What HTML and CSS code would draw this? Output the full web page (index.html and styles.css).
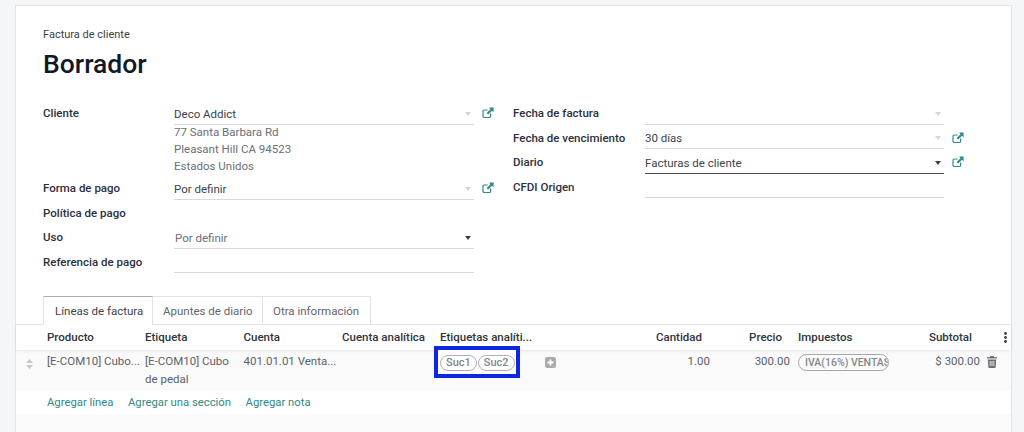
FILE: index.html
```html
<!DOCTYPE html>
<html lang="es">
<head>
<meta charset="utf-8">
<title>Factura de cliente</title>
<link rel="stylesheet" href="styles.css">
</head>
<body>
<svg class="defs" width="0" height="0" aria-hidden="true">
  <symbol id="ext" viewBox="0 0 12 12">
    <path d="M8.6 6.6v2.6a1.3 1.3 0 0 1-1.3 1.3H2.3A1.3 1.3 0 0 1 1 9.2V4.3A1.3 1.3 0 0 1 2.3 3h3.4" fill="none" stroke="currentColor" stroke-width="1.2"/>
    <path d="M7 0.6h4.6v4.6L10 3.7 6.2 7.6 4.6 6 8.5 2.2z" fill="currentColor"/>
  </symbol>
</svg>
<main class="sheet">
  <div class="head">
    <div class="kind">Factura de cliente</div>
    <h1 class="title">Borrador</h1>
  </div>
  <div class="groups">
    <div class="group">
      <div class="row tall">
        <div class="lbl">Cliente</div>
        <div class="val">
          <div class="input"><span>Deco Addict</span><i class="caret light"></i></div>
          <div class="addr">77 Santa Barbara Rd<br>Pleasant Hill CA 94523<br>Estados Unidos</div>
        </div>
        <svg class="ext"><use href="#ext"/></svg>
      </div>
      <div class="row">
        <div class="lbl">Forma de pago</div>
        <div class="val"><div class="input"><span>Por definir</span><i class="caret light"></i></div></div>
        <svg class="ext"><use href="#ext"/></svg>
      </div>
      <div class="row">
        <div class="lbl">Política de pago</div>
        <div class="val"></div>
      </div>
      <div class="row">
        <div class="lbl">Uso</div>
        <div class="val"><div class="input muted"><span class="pad">Por definir</span><i class="caret"></i></div></div>
      </div>
      <div class="row">
        <div class="lbl">Referencia de pago</div>
        <div class="val"><div class="input"></div></div>
      </div>
    </div>
    <div class="group">
      <div class="row">
        <div class="lbl">Fecha de factura</div>
        <div class="val"><div class="input"><span></span><i class="caret light"></i></div></div>
      </div>
      <div class="row">
        <div class="lbl">Fecha de vencimiento</div>
        <div class="val"><div class="input"><span>30 días</span><i class="caret light"></i></div></div>
        <svg class="ext"><use href="#ext"/></svg>
      </div>
      <div class="row">
        <div class="lbl">Diario</div>
        <div class="val"><div class="input focus"><span>Facturas de cliente</span><i class="caret"></i></div></div>
        <svg class="ext"><use href="#ext"/></svg>
      </div>
      <div class="row">
        <div class="lbl">CFDI Origen</div>
        <div class="val"><div class="input"></div></div>
      </div>
    </div>
  </div>
  <nav class="tabs">
    <div class="tab active">Líneas de factura</div>
    <div class="tab">Apuntes de diario</div>
    <div class="tab">Otra información</div>
  </nav>
  <div class="lines">
    <div class="grid thead">
      <div></div>
      <div>Producto</div>
      <div>Etiqueta</div>
      <div>Cuenta</div>
      <div>Cuenta analítica</div>
      <div>Etiquetas analíti...</div>
      <div></div>
      <div class="num">Cantidad</div>
      <div class="num">Precio</div>
      <div>Impuestos</div>
      <div class="num">Subtotal</div>
      <div class="dots"><svg width="3" height="11" viewBox="0 0 3 11"><circle cx="1.5" cy="1.5" r="1.4"/><circle cx="1.5" cy="5.5" r="1.4"/><circle cx="1.5" cy="9.5" r="1.4"/></svg></div>
    </div>
    <div class="grid tbody">
      <div class="handle"><svg width="7" height="10" viewBox="0 0 7 10"><path d="M3.5 0 7 4H0zM0 6h7l-3.5 4z"/></svg></div>
      <div class="clip">[E-COM10] Cubo...</div>
      <div>[E-COM10] Cubo de pedal</div>
      <div class="clip">401.01.01 Venta...</div>
      <div></div>
      <div class="tagcell">
        <span class="mark"></span>
        <span class="tag">Suc1</span><span class="tag">Suc2</span>
      </div>
      <div class="plus"><svg width="11" height="11" viewBox="0 0 11 11"><rect width="11" height="11" rx="2.2"/><path d="M5.5 2.5v6M2.5 5.5h6" stroke="#fff" stroke-width="1.8"/></svg></div>
      <div class="num">1.00</div>
      <div class="num">300.00</div>
      <div><span class="tax">IVA(16%) VENTAS</span></div>
      <div class="num">$ 300.00</div>
      <div class="trash"><svg width="10" height="12" viewBox="0 0 10 12"><path d="M3.4 0h3.2l.6 1.3H10v1.3H0V1.3h2.8zM.8 3.4h8.4l-.5 7.5a1.1 1.1 0 0 1-1.1 1.1H2.4a1.1 1.1 0 0 1-1.1-1.1z"/><path d="M3.2 5v5M5 5v5M6.8 5v5" stroke="#fafafa" stroke-width=".8"/></svg></div>
    </div>
    <div class="adds">
      <a>Agregar línea</a><a>Agregar una sección</a><a>Agregar nota</a>
    </div>
    <div class="foot"></div>
  </div>
</main>
</body>
</html>
```

FILE: styles.css
```css
* { box-sizing: border-box; }
html, body { height: 100%; }
body {
  margin: 0;
  padding: 5px 12px 0 15px;
  background: #f5f6f8;
  font-family: Roboto, "Liberation Sans", sans-serif;
  font-size: 11.5px;
  color: #4a4f59;
  overflow: hidden;
}
.defs { position: absolute; }
.sheet {
  height: 427px;
  background: #fff;
  border: 1px solid #e3e5e9;
  border-bottom: 0;
  display: flex;
  flex-direction: column;
}
.head { padding: 22px 0 0 27px; }
.kind { font-size: 11px; line-height: 13px; color: #3b3f48; }
.title {
  margin: 7px 0 0;
  font-size: 26.5px;
  line-height: 32px;
  font-weight: 500;
  color: #111827;
}
.groups {
  display: flex;
  padding: 24px 0 0 27px;
  height: 216px;
}
.group { width: 470px; }
.row {
  display: flex;
  align-items: flex-start;
  height: 24.5px;
}
.row.tall { height: 75px; }
.lbl {
  width: 131px;
  flex: none;
  font-weight: 500;
  font-size: 11.5px;
  line-height: 18px;
  color: #2b303b;
}
.val { width: 300px; flex: none; }
.group + .group .lbl { width: 132px; }
.group + .group .val { width: 299px; }
.input {
  height: 20.5px;
  border-bottom: 1px solid #d5d8dd;
  display: flex;
  align-items: center;
  justify-content: space-between;
  padding-right: 3px;
  color: #3d424c;
  line-height: 20px;
}
.input.muted { color: #6b7079; }
.pad { padding-left: 1px; }
.input.focus { border-bottom-color: #4a4f59; }
.caret {
  width: 0;
  height: 0;
  border: 3.5px solid transparent;
  border-top: 4px solid #3a3f49;
  border-bottom: 0;
}
.caret.light { border-top-color: #d3d5d9; }
.addr { color: #6b7079; line-height: 17px; margin-top: -1px; }
.ext { width: 12px; height: 12px; margin: 3px 0 0 8px; color: #2f8a88; flex: none; }
.tabs {
  display: flex;
  padding-left: 27px;
  height: 29px;
  position: relative;
  z-index: 1;
}
.tab {
  height: 29px;
  width: 108px;
  padding: 0 10px;
  line-height: 28px;
  border: 1px solid #e1e3e7;
  border-bottom: 0;
  border-left: 0;
  color: #5f646d;
  white-space: nowrap;
}
.tab.active {
  width: 110px;
  padding-left: 11px;
  border-left: 1px solid #e1e3e7;
  border-top-color: #b9a6b1;
  background: #fff;
  color: #3d424c;
}
.tab:nth-child(2) { width: 110px; }
.lines { flex: 1; display: flex; flex-direction: column; border-top: 1px solid #e6e7eb; margin-top: -1px; }
.grid {
  display: grid;
  grid-template-columns: 27px 98px 98.5px 98.5px 98px 102px 60px 116px 80px 104px 86px 27px;
  align-items: start;
}
.grid > div { padding: 0 4px; min-width: 0; }
.thead {
  height: 25px;
  font-weight: 500;
  font-size: 11.5px;
  line-height: 25px;
  color: #2f3440;
  box-shadow: 0 1px 3px rgba(0,0,0,.08);
  position: relative;
  white-space: nowrap;
}
.thead .num { padding-right: 12px; }
.tbody {
  height: 40px;
  background: #fafafa;
  color: #5c616a;
  line-height: 17.5px;
  padding-top: 3px;
}
.clip { white-space: nowrap; }
.num { text-align: right; }
.grid > .dots { display: flex; justify-content: flex-end; padding: 0 4px 0 0; height: 25px; align-items: center; }
.dots svg { fill: #3a3f49; }
.grid > .handle { padding: 4px 0 0; text-align: center; }
.handle svg { fill: #c4c7cc; }
.grid > .tagcell { position: relative; display: flex; gap: 1px; padding-top: 2px; white-space: nowrap; }
.mark {
  position: absolute;
  left: -2px;
  top: -7px;
  width: 86px;
  height: 32px;
  border: 4px solid #0d27e0;
  background: #fff;
}
.tag {
  position: relative;
  height: 16px;
  line-height: 14px;
  padding: 0 5px;
  border: 1px solid #aeb0b4;
  border-radius: 9px;
  color: #84878d;
  font-size: 11px;
  font-weight: 500;
}
.grid > .plus { padding: 4px 0 0 7px; }
.plus svg { fill: #a9abaf; display: block; }
.tax {
  display: block;
  width: 91px;
  height: 17px;
  margin-top: 1px;
  border: 1px solid #a5a7ab;
  border-radius: 9px;
  overflow: hidden;
  padding-left: 6px;
  font-size: 10.5px;
  font-weight: 500;
  line-height: 15px;
  color: #85888e;
  white-space: nowrap;
}
.grid > .trash { padding: 3px 0 0 3px; }
.trash svg { fill: #6b6f76; display: block; }
.adds {
  height: 24px;
  display: flex;
  gap: 14.5px;
  padding-left: 31px;
  align-items: center;
  color: #2f8a88;
  font-size: 11.3px;
}
.foot { flex: 1; background: #fafafa; }
```
